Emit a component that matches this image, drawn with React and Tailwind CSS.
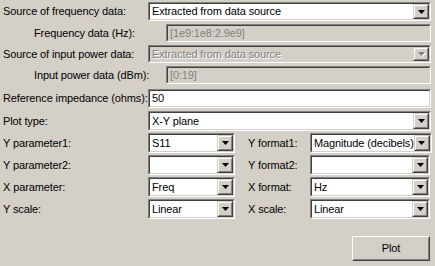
import React from 'react';

const Arrow = ({ disabled }) => (
  <svg width="7" height="4" viewBox="0 0 7 4" className="block" style={disabled ? { filter: 'drop-shadow(1px 1px 0 #ffffff)' } : undefined}>
    <path d="M0 0H7L3.5 4Z" fill={disabled ? '#808080' : '#000000'} />
  </svg>
);

const Sunken = ({ className = '', bg = 'bg-white', children }) => (
  <div className={`border border-t-[#808080] border-l-[#808080] border-b-white border-r-white ${className}`}>
    <div className={`h-full border border-t-[#404040] border-l-[#404040] border-b-[#d4d0c8] border-r-[#d4d0c8] ${bg} flex items-center`}>
      {children}
    </div>
  </div>
);

const Combo = ({ value, width = 'w-full', disabled }) => (
  <Sunken className={`${width} h-full shrink-0`} bg={disabled ? 'bg-[#d4d0c8]' : 'bg-white'}>
    <span
      className={`flex-1 pl-[2px] truncate ${disabled ? 'text-[#808080] [text-shadow:1px_1px_0_#ffffff]' : 'text-black'}`}
    >
      {value}
    </span>
    <div className="w-4 h-full shrink-0 border border-t-[#d4d0c8] border-l-[#d4d0c8] border-b-[#404040] border-r-[#404040]">
      <div className="w-full h-full border border-t-white border-l-white border-b-[#808080] border-r-[#808080] bg-[#d4d0c8] flex items-center justify-center">
        <Arrow disabled={disabled} />
      </div>
    </div>
  </Sunken>
);

const Edit = ({ value, disabled }) => (
  <Sunken className="w-full h-full" bg={disabled ? 'bg-[#d4d0c8]' : 'bg-white'}>
    <span className={`pl-[2px] ${disabled ? 'text-[#808080]' : 'text-black'}`}>{value}</span>
  </Sunken>
);

const Row = ({ label, indent, className, children }) => (
  <div className={`flex items-center ${className}`}>
    <div className={`w-[148px] shrink-0 ${indent ? 'pl-[34px]' : 'pl-[3px]'} whitespace-nowrap`}>{label}</div>
    <div className="flex-1 h-full pr-[4px]">{children}</div>
  </div>
);

const PairRow = ({ l1, v1, l2, v2, className }) => (
  <div className={`flex items-center ${className}`}>
    <div className="w-[148px] shrink-0 pl-[3px] whitespace-nowrap">{l1}</div>
    <Combo value={v1} width="w-[87px]" />
    <div className="w-[75px] shrink-0 pl-[13px] whitespace-nowrap">{l2}</div>
    <div className="flex-1 h-full pr-[5px]">
      <Combo value={v2} />
    </div>
  </div>
);

export default function App() {
  return (
    <div
      className="w-[435px] h-[266px] bg-[#d4d0c8] text-black text-[11px] tracking-[-0.12px] leading-none overflow-hidden flex flex-col"
      style={{ fontFamily: '"Liberation Sans", Arial, sans-serif' }}
    >
      <Row label="Source of frequency data:" className="h-[19px] mt-[2px]">
        <Combo value="Extracted from data source" />
      </Row>
      <Row label="Frequency data (Hz):" indent className="h-[18px] mt-[3px]">
        <div className="h-full pl-[18px]">
          <Edit value="[1e9:1e8:2.9e9]" disabled />
        </div>
      </Row>
      <Row label="Source of input power data:" className="h-[18px] mt-[3px]">
        <Combo value="Extracted from data source" disabled />
      </Row>
      <Row label="Input power data (dBm):" indent className="h-[18px] mt-[3px]">
        <div className="h-full pl-[18px]">
          <Edit value="[0:19]" disabled />
        </div>
      </Row>
      <Row label="Reference impedance (ohms):" className="h-[19px] mt-[5px]">
        <Edit value="50" />
      </Row>
      <Row label="Plot type:" className="h-[20px] mt-[3px]">
        <Combo value="X-Y plane" />
      </Row>
      <PairRow l1="Y parameter1:" v1="S11" l2="Y format1:" v2="Magnitude (decibels)" className="h-[20px] mt-[2px]" />
      <PairRow l1="Y parameter2:" v1="" l2="Y format2:" v2="" className="h-[20px] mt-[2px]" />
      <PairRow l1="X parameter:" v1="Freq" l2="X format:" v2="Hz" className="h-[20px] mt-[2px]" />
      <PairRow l1="Y scale:" v1="Linear" l2="X scale:" v2="Linear" className="h-[20px] mt-[2px]" />
      <div className="flex justify-end pr-[5px] mt-[17px]">
        <button className="w-[78px] h-[25px] border border-t-white border-l-white border-b-[#404040] border-r-[#404040] bg-[#d4d0c8] p-0">
          <div className="w-full h-full border border-t-[#d4d0c8] border-l-[#d4d0c8] border-b-[#808080] border-r-[#808080] flex items-center justify-center text-[11px]">
            Plot
          </div>
        </button>
      </div>
    </div>
  );
}
